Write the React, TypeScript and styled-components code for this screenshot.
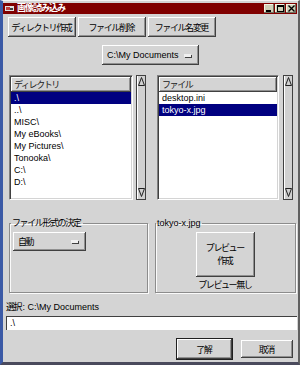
import React from 'react'
import styled, { createGlobalStyle } from 'styled-components'

const GlobalStyle = createGlobalStyle`
  html, body {
    margin: 0;
    padding: 0;
    background: #d4d4d4;
  }
  body {
    font-family: "Liberation Sans", "Noto Sans CJK JP", sans-serif;
    font-size: 9px;
    color: #000;
  }
`

const raised = `
  background: #d4d4d4;
  box-shadow: inset -1px -1px #404040, inset 1px 1px #ffffff, inset -2px -2px #909090;
`

// narrow the full-width kana/kanji so they read like the proportional font of the reference
const Jp = styled.span`
  letter-spacing: -1.4px;
  padding-right: 1.4px;
`

const Window = styled.div`
  box-sizing: border-box;
  width: 300px;
  height: 365px;
  background: #d4d4d4;
  border-left: 3px solid #3b5aa6;
  border-top: 1px solid #f4f4f4;
  border-right: 2px solid #606060;
  border-bottom: 3px solid #4a4a5c;
  padding: 2px 1px 0 0;
  display: flex;
  flex-direction: column;
`

const TitleBar = styled.div`
  height: 11px;
  background: #800000;
  display: flex;
  align-items: center;
  padding: 0 1px 0 2px;
  gap: 3px;
`

const TitleText = styled.span`
  color: #fff;
  font-weight: bold;
  font-size: 9px;
  line-height: 11px;
  letter-spacing: -1px;
  flex: 1;
`

const TitleButtons = styled.div`
  display: flex;
  gap: 1px;
`

const TitleButton = styled.div`
  width: 10px;
  height: 9px;
  background: #cfcfb8;
  box-shadow: inset -1px -1px #707060, inset 1px 1px #f4f4e4;
  display: flex;
  align-items: center;
  justify-content: center;
`

const Toolbar = styled.div`
  display: flex;
  gap: 2px;
  margin-top: 3px;
  padding-left: 5px;
`

const Button = styled.div<{ $w: number; $h?: number }>`
  ${raised}
  box-sizing: border-box;
  width: ${(p) => p.$w}px;
  height: ${(p) => p.$h ?? 20}px;
  display: flex;
  align-items: center;
  justify-content: center;
  text-align: center;
  white-space: nowrap;
`

const DefaultButton = styled(Button)`
  border: 1px solid #202020;
`

const DropRow = styled.div`
  display: flex;
  justify-content: center;
  margin-top: 8px;
  padding-left: 1px;
`

const Dropdown = styled.div<{ $w: number; $h: number }>`
  ${raised}
  box-sizing: border-box;
  width: ${(p) => p.$w}px;
  height: ${(p) => p.$h}px;
  display: flex;
  align-items: center;
  justify-content: space-between;
  padding: 0 8px 0 5px;
  white-space: nowrap;
`

const Indicator = styled.span`
  width: 7px;
  height: 3px;
  background: #f0f0f0;
  box-shadow: 1px 1px #404040;
`

const Panels = styled.div`
  display: flex;
  gap: 11px;
  margin-top: 10px;
  padding-left: 6px;
  height: 125px;
`

const ListColumn = styled.div<{ $gap: number }>`
  display: flex;
  gap: ${(p) => p.$gap}px;
`

const ListBox = styled.div<{ $w: number }>`
  box-sizing: border-box;
  width: ${(p) => p.$w}px;
  height: 125px;
  background: #fff;
  border-top: 1px solid #808080;
  border-left: 1px solid #808080;
  border-right: 1px solid #ffffff;
  border-bottom: 1px solid #ffffff;
  box-shadow: inset 1px 1px #404040, inset -1px -1px #d4d4d4;
  padding: 1px;
  overflow: hidden;
`

const ListHeader = styled.div`
  ${raised}
  height: 15px;
  display: flex;
  align-items: center;
  padding-left: 3px;
  color: #202020;
`

const Row = styled.div<{ $selected?: boolean }>`
  height: 12px;
  line-height: 12px;
  padding-left: 3px;
  white-space: nowrap;
  background: ${(p) => (p.$selected ? '#000080' : 'transparent')};
  color: ${(p) => (p.$selected ? '#fff' : '#000')};
`

const ScrollBar = styled.div`
  box-sizing: border-box;
  width: 10px;
  height: 125px;
  border: 1px solid #404040;
  background: #d0d0d0;
  box-shadow: inset 1px 0 #ffffff;
  display: flex;
  flex-direction: column;
  justify-content: space-between;
  align-items: center;
  padding: 1px 0 2px;
`

const Groups = styled.div`
  display: flex;
  gap: 7px;
  margin-top: 17px;
  padding-left: 6px;
`

const Group = styled.fieldset<{ $w: number }>`
  box-sizing: border-box;
  width: ${(p) => p.$w}px;
  height: 76px;
  margin: 0;
  padding: 3px 3px 2px 3px;
  border: 1px solid #8c8c8c;
  box-shadow: inset 1px 1px #fafafa, 1px 1px #fafafa;
  display: flex;
  flex-direction: column;
`

const Legend = styled.legend<{ $shift?: number }>`
  padding: 0 1px;
  margin-left: ${(p) => p.$shift ?? -2}px;
  line-height: 12px;
`

const PreviewBox = styled.div`
  display: flex;
  flex-direction: column;
  align-items: center;
  gap: 2px;
`

const PreviewButton = styled(Button)`
  flex-direction: column;
  line-height: 13px;
`

const Caption = styled.div`
  line-height: 12px;
`

const SelLabel = styled.div`
  margin-top: 8px;
  padding-left: 3px;
  line-height: 12px;
`

const PathInput = styled.div`
  box-sizing: border-box;
  margin: 3px 0 0 3px;
  width: 291px;
  height: 14px;
  background: #fff;
  border-top: 1px solid #404040;
  border-left: 1px solid #404040;
  line-height: 12px;
  padding-left: 3px;
`

const Footer = styled.div`
  display: flex;
  justify-content: flex-end;
  align-items: center;
  gap: 8px;
  margin-top: 8px;
  padding-right: 4px;
`

const dirs = ['.\\', '..\\', 'MISC\\', 'My eBooks\\', 'My Pictures\\', 'Tonooka\\', 'C:\\', 'D:\\']
const files = ['desktop.ini', 'tokyo-x.jpg']

const ScrollArrows = () => (
  <ScrollBar>
    <svg width="7" height="9" viewBox="0 0 7 9">
      <path d="M3.5 0.5 L6.5 8.5 L0.5 8.5 Z" fill="none" stroke="#202020" strokeWidth="1" />
    </svg>
    <svg width="7" height="9" viewBox="0 0 7 9">
      <path d="M0.5 0.5 L6.5 0.5 L3.5 8.5 Z" fill="none" stroke="#202020" strokeWidth="1" />
    </svg>
  </ScrollBar>
)

const App = () => {
  return (
    <>
      <GlobalStyle />
      <Window>
        <TitleBar>
          <svg width="9" height="7" viewBox="0 0 9 7">
            <rect x="0" y="1" width="9" height="5" fill="#e0e0e0" />
            <rect x="1" y="2" width="4" height="3" fill="#c04040" />
            <rect x="5" y="3" width="3" height="2" fill="#404040" />
          </svg>
          <TitleText>画像読み込み</TitleText>
          <TitleButtons>
            <TitleButton>
              <svg width="6" height="6" viewBox="0 0 6 6">
                <rect x="0" y="4" width="5" height="2" fill="#000" />
              </svg>
            </TitleButton>
            <TitleButton>
              <svg width="7" height="7" viewBox="0 0 7 7">
                <rect x="0.5" y="0.5" width="6" height="6" fill="none" stroke="#000" />
                <rect x="0" y="0" width="7" height="2" fill="#000" />
              </svg>
            </TitleButton>
            <TitleButton>
              <svg width="7" height="7" viewBox="0 0 7 7">
                <path d="M0.5 0.5 L6.5 6.5 M6.5 0.5 L0.5 6.5" stroke="#000" strokeWidth="1.4" />
              </svg>
            </TitleButton>
          </TitleButtons>
        </TitleBar>

        <Toolbar>
          <Button $w={68}><Jp>ディレクトリ作成</Jp></Button>
          <Button $w={68}><Jp>ファイル削除</Jp></Button>
          <Button $w={68}><Jp>ファイル名変更</Jp></Button>
        </Toolbar>

        <DropRow>
          <Dropdown $w={97} $h={20}>
            <span>C:\My Documents</span>
            <Indicator />
          </Dropdown>
        </DropRow>

        <Panels>
          <ListColumn $gap={3}>
            <ListBox $w={124}>
              <ListHeader><Jp>ディレクトリ</Jp></ListHeader>
              {dirs.map((d, i) => (
                <Row key={d} $selected={i === 0}>
                  {d}
                </Row>
              ))}
            </ListBox>
            <ScrollArrows />
          </ListColumn>
          <ListColumn $gap={4}>
            <ListBox $w={122}>
              <ListHeader><Jp>ファイル</Jp></ListHeader>
              {files.map((f, i) => (
                <Row key={f} $selected={i === 1}>
                  {f}
                </Row>
              ))}
            </ListBox>
            <ScrollArrows />
          </ListColumn>
        </Panels>

        <Groups>
          <Group $w={139}>
            <Legend><Jp>ファイル形式の決定</Jp></Legend>
            <Dropdown $w={73} $h={19}>
              <Jp>自動</Jp>
              <Indicator />
            </Dropdown>
          </Group>
          <Group $w={141}>
            <Legend $shift={-3}>tokyo-x.jpg</Legend>
            <PreviewBox>
              <PreviewButton $w={59} $h={45}>
                <Jp>プレビュー</Jp>
                <Jp>作成</Jp>
              </PreviewButton>
              <Caption><Jp>プレビュー無し</Jp></Caption>
            </PreviewBox>
          </Group>
        </Groups>

        <SelLabel><Jp>選択</Jp>: C:\My Documents</SelLabel>
        <PathInput>.\</PathInput>

        <Footer>
          <DefaultButton $w={57} $h={22}><Jp>了解</Jp></DefaultButton>
          <Button $w={52} $h={18}><Jp>取消</Jp></Button>
        </Footer>
      </Window>
    </>
  )
}

export default App
